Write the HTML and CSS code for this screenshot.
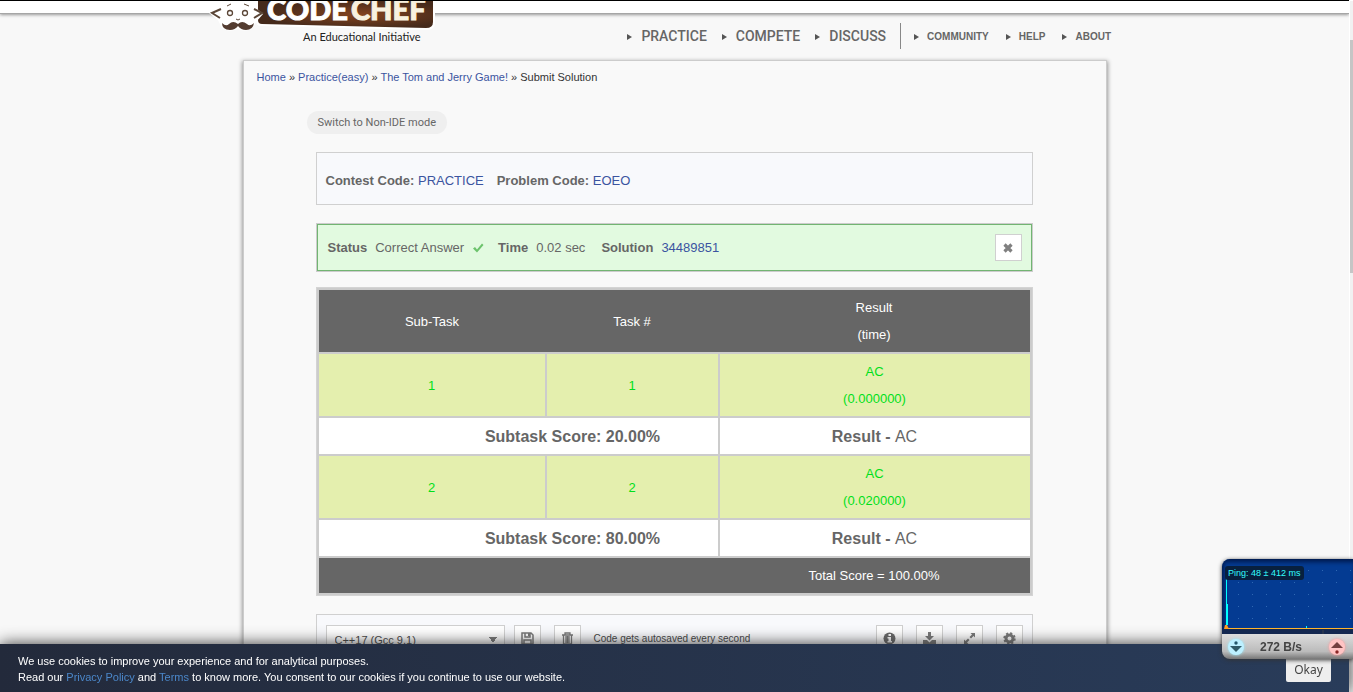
FILE: index.html
```html
<!DOCTYPE html>
<html lang="en">
<head>
<meta charset="utf-8">
<title>Submit Solution | CodeChef</title>
<link rel="stylesheet" href="styles.css">
</head>
<body>
<div class="page">
  <div class="topbar"></div>
  <header class="header">
    <a class="logo" href="#" aria-label="CodeChef">
      <svg width="230" height="46" viewBox="0 0 230 46">
        <defs>
          <radialGradient id="brown" cx="0.58" cy="0.5" r="0.55">
            <stop offset="0" stop-color="#84431f"/><stop offset="1" stop-color="#452a1b"/>
          </radialGradient>
        </defs>
        <path d="M48 0H227V22Q227 29 219 29L53 25Q48 25 48 20Z" fill="#fff"/>
        <path d="M50 0H225V21Q225 27 218 27L54 23Q50 23 50 19Z" fill="url(#brown)"/>
        <text class="logo-text" x="59" y="19" fill="#fff" stroke="#fff">CODE</text>
        <text class="logo-text" x="143" y="19" fill="#f8f1df" stroke="#f8f1df">CHEF</text>
        <path d="M1 12L12 5L16 0H42L46 5L55 13L49 20L44 27Q38 32 30 28Q21 32 14 27L10 19Z" fill="#fff"/>
        <g fill="none" stroke="#5b4637" stroke-width="2">
          <path d="M13 8L4 12L12 17M46 8L54 12L46 17"/>
          <circle cx="22" cy="12" r="2.500" stroke-width="1.300"/><circle cx="37" cy="12" r="2.500" stroke-width="1.300"/>
          <path d="M19 5L23 3M36 3L41 5M28 18Q30 20 32 18" stroke-width="1"/>
        </g>
        <path d="M30 23Q25 19 21 23Q18 26 14 22Q14 29 22 29Q27 29 30 25Q33 29 38 29Q45 29 46 22Q42 26 39 23Q34 19 30 23Z" fill="#533c30"/>
        <text class="tagline" x="95" y="40">An Educational Initiative</text>
      </svg>
    </a>
    <nav class="nav">
      <ul class="main-nav">
        <li><a href="#">PRACTICE</a></li>
        <li><a href="#">COMPETE</a></li>
        <li><a href="#">DISCUSS</a></li>
      </ul>
      <ul class="sub-nav">
        <li><a href="#">COMMUNITY</a></li>
        <li><a href="#">HELP</a></li>
        <li><a href="#">ABOUT</a></li>
      </ul>
    </nav>
  </header>

  <main class="card">
    <div class="breadcrumb"><a href="#">Home</a> » <a href="#">Practice(easy)</a> » <a href="#">The Tom and Jerry Game!</a> » Submit Solution</div>
    <button class="mode" type="button">Switch to Non-IDE mode</button>
    <div class="content">
      <div class="codes">
        <span><b>Contest Code:</b> <a href="#">PRACTICE</a></span>
        <span><b>Problem Code:</b> <a href="#">EOEO</a></span>
      </div>
      <div class="status">
        <div class="status-in">
          <b>Status</b><span>Correct Answer</span>
          <svg class="tick" width="12" height="12" viewBox="0 0 12 12"><path d="M1 6.500L3 5L5 7.500L10 1.500L11.500 3L5 10.500Z" fill="#6cc36c"/></svg>
          <b>Time</b><span>0.02 sec</span>
          <b class="solution">Solution</b><a href="#">34489851</a>
          <button class="square close" type="button" aria-label="Close">
            <svg width="10" height="10" viewBox="0 0 10 10"><path d="M1.500 1.500L8.500 8.500M8.500 1.500L1.500 8.500" stroke="#808080" stroke-width="3.200"/></svg>
          </button>
        </div>
      </div>
      <div class="results-box">
        <table class="results">
          <colgroup><col class="c1"><col class="c2"><col></colgroup>
          <thead><tr><th>Sub-Task</th><th>Task #</th><th>Result<br>(time)</th></tr></thead>
          <tbody>
            <tr class="ac"><td>1</td><td>1</td><td>AC<br>(0.000000)</td></tr>
            <tr class="score"><td colspan="2"><b>Subtask Score: 20.00%</b></td><td><b>Result - </b>AC</td></tr>
            <tr class="ac"><td>2</td><td>2</td><td>AC<br>(0.020000)</td></tr>
            <tr class="score"><td colspan="2"><b>Subtask Score: 80.00%</b></td><td><b>Result - </b>AC</td></tr>
          </tbody>
          <tfoot><tr><td colspan="2"></td><td>Total Score = 100.00%</td></tr></tfoot>
        </table>
      </div>
      <div class="toolbar">
        <select class="language" aria-label="Language"><option>C++17 (Gcc 9.1)</option></select>
        <button class="square" type="button" aria-label="Save"><svg width="13" height="13" viewBox="0 0 13 13"><path d="M1 1H10L12 3V12H1ZM4 1V5H9V1M3 12V8H10V12" fill="none" stroke="#777" stroke-width="1.500"/><path d="M7 1H9V4H7Z" fill="#777"/></svg></button>
        <button class="square" type="button" aria-label="Delete"><svg width="13" height="13" viewBox="0 0 13 13"><path d="M1 3H12M4 3V1H9V3M2.500 3V12H10.500V3M5 4V11M6.500 4V11M8 4V11" fill="none" stroke="#777" stroke-width="1.300"/></svg></button>
        <span class="autosave">Code gets autosaved every second</span>
        <button class="square" type="button" aria-label="Information"><svg width="13" height="13" viewBox="0 0 13 13"><circle cx="6.500" cy="6.500" r="6" fill="#666"/><path d="M5.500 2H8V4H5.500ZM4.500 5H8V9H9V10.500H4.500V9H5.500V6.500H4.500Z" fill="#fff"/></svg></button>
        <button class="square" type="button" aria-label="Download"><svg width="13" height="13" viewBox="0 0 13 13"><path d="M5 0H8V4H11L6.500 8.500L2 4H5ZM0 8H4L6.500 10.500L9 8H13V12H0Z" fill="#777"/></svg></button>
        <button class="square" type="button" aria-label="Expand"><svg width="13" height="13" viewBox="0 0 13 13"><path d="M7.500 1H12V5.500L10.500 4L8 6.500L6.500 5L9 2.500ZM1 7.500L2.500 9L5 6.500L6.500 8L4 10.500L5.500 12H1Z" fill="#777"/></svg></button>
        <button class="square" type="button" aria-label="Settings"><svg width="13" height="13" viewBox="0 0 13 13"><circle cx="6.500" cy="6.500" r="3.500" fill="none" stroke="#777" stroke-width="3"/><circle cx="6.500" cy="6.500" r="5.300" fill="none" stroke="#777" stroke-width="1.800" stroke-dasharray="2.160 2"/></svg></button>
      </div>
    </div>
  </main>
</div>

<div class="scrollbar"><div class="thumb"></div></div>

<aside class="cookies">
  <p>We use cookies to improve your experience and for analytical purposes.<br>Read our <a href="#">Privacy Policy</a> and <a href="#">Terms</a> to know more. You consent to our cookies if you continue to use our website.</p>
  <button type="button">Okay</button>
</aside>

<div class="meter">
  <div class="graph">
    <svg width="131" height="75" viewBox="0 0 131 75">
      <defs><pattern id="dots" x="6" y="7" width="14" height="12" patternUnits="userSpaceOnUse"><rect x="10" y="4" width="1" height="1" fill="#2f68b3"/></pattern></defs>
      <rect x="4" y="4" width="127" height="64" fill="url(#dots)"/>
      <rect y="70" width="131" height="5" fill="#142850"/>
      <path d="M101 71V75" stroke="#38404c"/>
      <path d="M4 19H5V45H6V66H4Z" fill="#0ff"/><rect x="84" y="67" width="1" height="2" fill="#0ff"/>
      <rect x="3" y="69" width="128" height="1" fill="#ffb52e"/><path d="M3 66H5L7 70H2Z" fill="#ff9c20"/>
    </svg>
    <span class="ping">Ping: 48 ± 412 ms</span>
  </div>
  <div class="rate">
    <svg class="down" width="16" height="16" viewBox="0 0 16 16"><path d="M2 7H14L8 13Z" fill="#315b68"/><circle cx="8" cy="4" r="1.700" fill="#24576b"/></svg>
    <span>272 B/s</span>
    <svg class="up" width="16" height="16" viewBox="0 0 16 16"><path d="M2 9H14L8 3Z" fill="#733f3f"/><circle cx="8" cy="13" r="1.700" fill="#8b2626"/></svg>
  </div>
</div>
</body>
</html>
```

FILE: styles.css
```css
* { box-sizing: border-box; }
html, body { margin: 0; height: 100%; overflow: hidden; }
body { font: 13px/20px "Liberation Sans", Arial, sans-serif; color: #666; background: #fff; }
a { color: #3b54a0; text-decoration: none; }
button, select { font-family: inherit; margin: 0; }

.page { display: flex; flex-direction: column; height: 100vh; margin-right: 4px; background: #f8f8f8; overflow: hidden; }
.topbar { flex: none; height: 14px; background: #fff; border-top: 1px solid #000; border-bottom: 1px solid #a6a6a6; box-shadow: 0 1px 3px #999; }
.header { position: relative; flex: none; display: flex; justify-content: flex-end; width: 100%; max-width: 933px; height: 46px; margin: 0 auto; padding-right: 30px; }
.logo { position: absolute; left: 0; top: -13px; }
.logo svg { display: block; }
.logo-text { font: 900 29px Lato, sans-serif; stroke-width: 1px; }
.tagline { font: 11px Lato, sans-serif; fill: #222; }

.nav { display: flex; align-items: flex-start; padding-top: 9px; }
.nav ul { display: flex; flex: none; margin: 0; padding: 0; list-style: none; }
.nav li { display: flex; flex: none; align-items: center; white-space: nowrap; }
.nav li::before { content: ""; flex: none; border: 3px solid transparent; border-left: 5px solid #555; border-right: 0; margin-top: 2px; }
.nav a { flex: none; color: #666; line-height: 26px; }
.nav .main-nav { gap: 15px; padding-right: 14px; border-right: 1px solid #888; font: 500 14px Roboto, sans-serif; }
.main-nav li { gap: 9px; }
.nav .sub-nav { gap: 17px; padding: 1px 0 0 13px; font-size: 10px; font-weight: bold; }
.sub-nav li { gap: 8px; }
.sub-nav li::before { margin-top: 0; }

.card { flex: 1; width: 100%; max-width: 864px; margin: 0 auto; padding: 6px 73px 0 13px; background: #f9f9f9; border: 1px solid #ccc; border-bottom: 0; box-shadow: 0 2px 4px 1px #999; overflow: hidden; }
.breadcrumb { font-size: 11px; color: #333; }
.mode { display: block; height: 23px; margin: 24px 0 18px 50px; padding: 0 11px; border: 0; border-radius: 12px; background: #efefef; color: #666; font: 11px Roboto, sans-serif; }
.content { margin-left: 59px; }
.codes { display: flex; gap: 13px; padding: 18px 9px 14px; line-height: 19px; background: #f8f9fc; border: 1px solid #d0d0d0; }
.status { margin-top: 18px; border: 1px solid #ccc; }
.status-in { display: flex; align-items: center; gap: 8px; height: 47px; padding: 0 9px 0 10px; background: #e2fae0; border: 1px solid #72b472; }
.tick { margin-right: 6px; }
.solution { margin-left: 8px; }
.square { flex: none; display: flex; align-items: center; justify-content: center; width: 27px; height: 27px; padding: 0; background: #fff; border: 1px solid #d0d0d0; }
.close { margin-left: auto; }
.square svg { display: block; }

.results-box { margin-top: 15px; border: 1px solid #d4d4d4; }
.results { width: 100%; table-layout: fixed; border-collapse: collapse; border: 2px solid #ccc; text-align: center; line-height: 27px; }
.results .c1 { width: 228px; }
.results .c2 { width: 173px; }
.results th, .results tfoot td { padding: 4px 0; background: #666; color: #fff; font-weight: normal; }
.results tbody td { padding: 4px 0; border: 2px solid #ccc; }
.results .ac td { background: #e4efae; color: #00e01a; }
.results .score td { padding: 5px 0 4px; background: #fff; font-size: 16px; }
.results .score td:first-child { padding-left: 109px; }

.toolbar { display: flex; gap: 13px; height: 100px; margin-top: 18px; padding: 10px 9px; background: #f8f9fc; border: 1px solid #d0d0d0; }
.language { width: 179px; height: 29px; margin-right: -4px; padding: 0 8px; appearance: none; border: 1px solid #d0d0d0; border-radius: 0; color: #444; font-size: 11px; background: #fff; background-image: linear-gradient(to bottom right, #777 50%, transparent 50%), linear-gradient(to bottom left, #777 50%, transparent 50%); background-size: 4px 6px; background-position: right 7px top 11px, right 11px top 11px; background-repeat: no-repeat; }
.autosave { margin-right: auto; font-size: 10px; line-height: 27px; color: #444; }

.scrollbar { position: fixed; top: 1px; right: 0; bottom: 0; width: 3px; padding-top: 39px; background: #f1f1f1; }
.thumb { height: 233px; background: #c5c5c5; }

.cookies { position: fixed; left: 0; right: 4px; bottom: 0; display: flex; justify-content: space-between; align-items: flex-start; height: 48px; padding: 9px 18px 0; color: #fff; background: linear-gradient(to right, #232a3b, #293c5a); box-shadow: 0 0 16px #333; font-size: 11px; line-height: 16px; }
.cookies p { margin: 0; }
.cookies a { color: #4b87c9; }
.cookies button { width: 45px; height: 29px; padding: 4px 0 0; border: 0; border-radius: 2px; background: #eee; color: #444; font: 12px "Noto Sans", sans-serif; }

.meter { position: fixed; right: 0; bottom: 33px; width: 131px; height: 100px; border-radius: 8px 0 0 8px; overflow: hidden; box-shadow: 0 1px 4px #333; }
.graph { position: relative; height: 75px; background: #043b92; box-shadow: inset 2px 3px 4px #001a4d; }
.graph svg { display: block; }
.ping { position: absolute; left: 3px; top: 7px; padding: 0 4px 0 3px; border-radius: 3px; background: #08203e; color: #3ff; font-size: 9px; line-height: 14px; white-space: nowrap; }
.rate { display: flex; align-items: center; gap: 16px; height: 25px; padding: 0 8px 0 6px; background: linear-gradient(#ddd, #bbb 70%, #777); color: #444; font-weight: bold; font-size: 12px; }
.rate svg { flex: none; border-radius: 8px; }
.down { background: #bdf0ff; box-shadow: 0 0 3px #9ef; }
.up { margin-left: auto; background: #ffc4c4; box-shadow: 0 0 3px #f99; }
```
